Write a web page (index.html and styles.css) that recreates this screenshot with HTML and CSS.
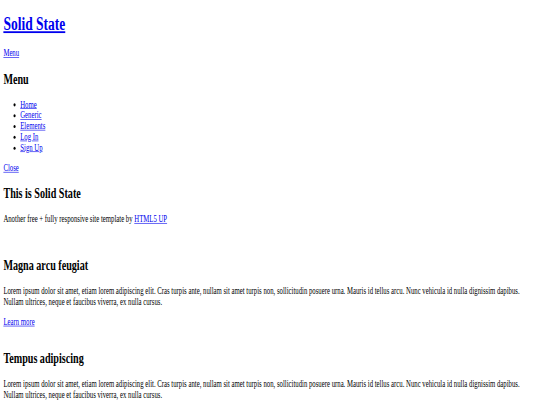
FILE: index.html
```html
<!DOCTYPE html>
<html>
<head>
<meta charset="utf-8">
<title>Solid State</title>
<link rel="stylesheet" href="styles.css">
</head>
<body>
<div class="viewport">
<div class="page">
<div id="page-wrapper">
<header id="header">
<h1><a href="#">Solid State</a></h1>
<nav><a href="#menu">Menu</a></nav>
</header>
<nav id="menu">
<div class="inner">
<h2>Menu</h2>
<ul class="links">
<li><a href="#">Home</a></li>
<li><a href="#">Generic</a></li>
<li><a href="#">Elements</a></li>
<li><a href="#">Log In</a></li>
<li><a href="#">Sign Up</a></li>
</ul>
<a href="#" class="close">Close</a>
</div>
</nav>
<section id="banner">
<div class="inner">
<h2>This is Solid State</h2>
<p>Another free + fully responsive site template by <a href="#">HTML5 UP</a></p>
</div>
</section>
<section class="wrapper">
<div class="inner">
<div class="image-slot"></div>
<div class="content">
<h2>Magna arcu feugiat</h2>
<p>Lorem ipsum dolor sit amet, etiam lorem adipiscing elit. Cras turpis ante, nullam sit amet turpis non, sollicitudin posuere urna. Mauris id tellus arcu. Nunc vehicula id nulla dignissim dapibus. Nullam ultrices, neque et faucibus viverra, ex nulla cursus.</p>
<a href="#">Learn more</a>
</div>
</div>
</section>
<section class="wrapper">
<div class="inner">
<div class="image-slot"></div>
<div class="content">
<h2>Tempus adipiscing</h2>
<p>Lorem ipsum dolor sit amet, etiam lorem adipiscing elit. Cras turpis ante, nullam sit amet turpis non, sollicitudin posuere urna. Mauris id tellus arcu. Nunc vehicula id nulla dignissim dapibus. Nullam ultrices, neque et faucibus viverra, ex nulla cursus.</p>
<a href="#">Learn more</a>
</div>
</div>
</section>
</div>
</div>
</div>
</body>
</html>
```
FILE: styles.css
```css
html, body {
  margin: 0;
  padding: 0;
  background: #ffffff;
  overflow: hidden;
}
.viewport {
  width: 540px;
  height: 405px;
  overflow: hidden;
}
.page {
  width: 1280px;
  padding: 8px;
  box-sizing: border-box;
  font-family: "Liberation Serif", serif;
  font-size: 16px;
  color: #000;
  transform-origin: 0 0;
  transform: scale(0.421875, 0.601);
}
#page-wrapper h1 {
  font-size: 32px;
  margin: 13.44px 0 21.44px;
}
h2 {
  font-size: 24px;
  margin: 19.92px 0;
}
p { margin: 16px 0; }
ul { margin: 16px 0; padding-left: 40px; }
a { color: #0000ee; }
.image-slot { height: 18.4px; }
```
